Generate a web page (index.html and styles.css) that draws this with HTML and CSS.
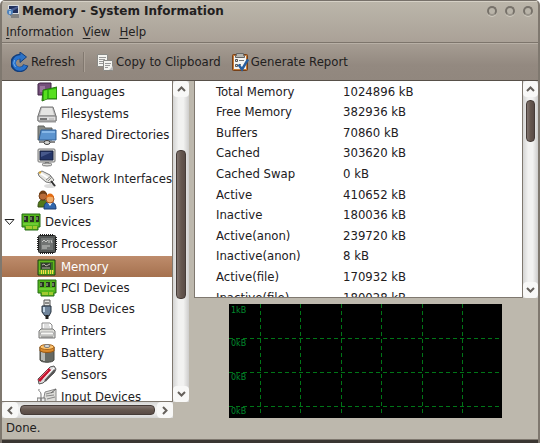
FILE: index.html
```html
<!DOCTYPE html>
<html lang="en">
<head>
<meta charset="utf-8">
<title>Memory - System Information</title>
<link rel="stylesheet" href="styles.css">
</head>
<body>
<div class="window">
  <header class="titlebar">
    <svg class="app-icon" viewBox="0 0 14 14" aria-hidden="true"><path d="M1 1h11v9H1z" fill="#d8dce0"/><path d="M2 2h9v7H2z" fill="#20305c"/><path d="M2 6l9-4v2L2 9z" fill="#4b5f92"/><path d="M1 10h11l2 4H1z" fill="#aeb0b0"/><path d="M3 11h9M4 13h8" stroke="#555" /><circle cx="3" cy="8" r="3" fill="#4d82bd"/><path d="M3 7v3M3 5v1" stroke="#fff"/></svg>
    <h1>Memory - System Information</h1>
    <div class="window-buttons">
      <button aria-label="Minimize"></button><button aria-label="Maximize"></button><button aria-label="Close"></button>
    </div>
  </header>
  <nav class="menubar">
    <button><u>I</u>nformation</button><button><u>V</u>iew</button><button><u>H</u>elp</button>
  </nav>
  <div class="toolbar">
    <button class="tool">
      <svg viewBox="0 0 18 20" aria-hidden="true"><path d="M10 4.500H8.500A6.500 6.500 0 1 0 14.800 13" fill="none" stroke="#123e7d" stroke-width="5.500"/><path d="M9 0l6.500 5L9 10.500z" fill="#2d73c5" stroke="#123e7d"/><path d="M10.500 5H8.500A6 6 0 1 0 14.500 13.500" fill="none" stroke="#2872cc" stroke-width="3.500"/><path d="M3.500 8a6 6 0 0 0 1 7" fill="none" stroke="#79b4ee"/></svg>Refresh</button>
    <span class="divider"></span>
    <button class="tool">
      <svg viewBox="0 0 18 20" aria-hidden="true"><path d="M1.500 2.500h10v12h-10z" fill="#f4f4f0" stroke="#8a8a86"/><path d="M3 5.500h7M3 7.500h6M3 9.500h7M3 11.500h5" stroke="#999"/><path d="M7.500 8.500h9v10h-9z" fill="#f4f4f0" stroke="#8a8a86"/><path d="M9 11.500h6M9 13.500h5M9 15.500h3" stroke="#999"/><path d="M17 14v4h-4z" fill="#bbb"/></svg>Copy to Clipboard</button>
    <button class="tool">
      <svg viewBox="0 0 18 20" aria-hidden="true"><rect x="1.500" y="2.500" width="15" height="16" rx="1" fill="#c87a35" stroke="#754018"/><path d="M3 4h12v13H3z" fill="#f5f5f3"/><path d="M5.500 3.500v-2h7v2h1v2h-9v-2z" fill="#b5b5b0" stroke="#666"/><path d="M4.500 7.500h2v2h-2zM4.500 12.500h2v2h-2z" fill="#ddd" stroke="#555"/><path d="M8 8.500h5M8 12.500h2" stroke="#777"/><path d="M7.500 12.500l3.500 5 6-10" fill="none" stroke="#285e9e" stroke-width="2.500"/></svg>Generate Report</button>
  </div>

  <main class="panes">
    <section class="sidebar">
      <ul class="tree">
        <li class="child"><svg viewBox="0 0 20 20"><path d="M1 2l2-1h11v12H1z" fill="#75507b" stroke="#3f2545"/><path d="M3 4h5v6H3z" fill="#9a769e"/><path d="M6 8l5-1 9-2v12H10l-5 2z" fill="#30b80f" stroke="#287010"/><path d="M7 9l3-1v9l-3 1zM12 8l7-1v9h-7z" fill="#58df20"/></svg>Languages</li>
        <li class="child short"><svg viewBox="0 0 20 20"><path d="M4 3h12l3 9v5H1v-5z" fill="#bbb" stroke="#777"/><path d="M5 4h10l2 7H3z" fill="#e5e5e3"/><path d="M1 12h18v5H1z" fill="#ddd" stroke="#777"/><path d="M3 14h7v2H3z" fill="#777"/><path d="M12 15h5" stroke="#aaa"/><path d="M2 18.500h17" stroke="#ccc"/></svg>Filesystems</li>
        <li class="child"><svg viewBox="0 0 20 20"><path d="M1 1h6l1 2h7v12H1z" fill="#888b86" stroke="#60635e"/><path d="M4 5h15v10H2z" fill="#5c94cf" stroke="#315f94"/><path d="M5 6h13v2H5z" fill="#87b7e7"/><path d="M2 17h16" stroke="#888" stroke-width="2"/><path d="M10 15v2" stroke="#555" stroke-width="2"/><ellipse cx="10" cy="17.500" rx="3" ry="2" fill="#d7d7d4" stroke="#444"/></svg>Shared Directories</li>
        <li class="child"><svg viewBox="0 0 20 20"><rect x="1" y="2" width="17" height="13" rx="1" fill="#ddddd9" stroke="#777"/><path d="M3 4h13v9H3z" fill="#243568" stroke="#16213e"/><path d="M4 5h11L4 10z" fill="#485a8c"/><path d="M8 15h4v2H8z" fill="#777"/><ellipse cx="10" cy="17.500" rx="5" ry="1.500" fill="#e1e1de" stroke="#777"/></svg>Display</li>
        <li class="child short"><svg viewBox="0 0 20 20"><ellipse cx="13" cy="17" rx="6" ry="2" fill="#ddd"/><path d="M1 4l4-2 8 4 4 5-3 3-5-1-7-6z" fill="#e4e4df" stroke="#777"/><path d="M3 4l8 5" stroke="#fff" stroke-width="2"/><path d="M9 11l5-4M11 12l4-4" stroke="#888"/><path d="M14 12l4 5" stroke="#333" stroke-width="2"/><path d="M2 4l2-1" stroke="#d6a532" stroke-width="2"/></svg>Network Interfaces</li>
        <li class="child"><svg viewBox="0 0 20 20"><path d="M1 17c0-6 2-7 5-7s5 2 5 7z" fill="#537818" stroke="#344c14"/><circle cx="6" cy="6" r="4" fill="#b86b38" stroke="#734018"/><path d="M2 5c0-6 8-6 8 0-4-2-5-1-8 0" fill="#704018"/><path d="M7 19c0-6 2-7 6-7s6 2 6 7z" fill="#3267ac" stroke="#1c3d70"/><path d="M11 13l2 3 2-3z" fill="#fff"/><circle cx="13" cy="9" r="4" fill="#efac68" stroke="#a75621"/><path d="M9 8c0-6 8-6 8 0-4-2-5-1-8 0" fill="#e36d16"/></svg>Users</li>
        <li class="parent short"><svg class="expander" viewBox="0 0 11 8"><path d="M1 1.500h9l-4.500 5z" fill="#fff" stroke="#222"/></svg><svg viewBox="0 0 20 20"><path d="M1 2h18v13h-2v3H4v-3H1z" fill="#53b51c" stroke="#276c15"/><path d="M3 4h4v6H3zM9 4h4v6H9zM15 4h3v6h-3z" fill="#263320"/><path d="M4 5v3M10 5v3M16 5v3" stroke="#b4c4a5"/><path d="M2 12h15" stroke="#8be34e"/><path d="M6 14v3M8 14v3M10 14v3M13 14v3M15 14v3" stroke="#f2df49"/></svg>Devices</li>
        <li class="child tall"><svg viewBox="0 0 20 20"><path d="M3.500 0v20M5.500 0v20M7.500 0v20M9.500 0v20M11.500 0v20M13.500 0v20M15.500 0v20M0 3.500h20M0 5.500h20M0 7.500h20M0 9.500h20M0 11.500h20M0 13.500h20M0 15.500h20" stroke="#252525"/><rect x="1.500" y="1.500" width="17" height="17" rx="1" fill="#545756" stroke="#222"/><path d="M4 4h12v12H4z" fill="#717473"/><path d="M5 8l2-2 2 2 2-2M12 6v3M14 6l1 3M5 12h8M5 14h5" fill="none" stroke="#c8c9c7"/></svg>Processor</li>
        <li class="child short selected"><svg viewBox="0 0 20 20"><path d="M1 3h17v15H1z" fill="#61b71c" stroke="#173b10"/><path d="M3 5h13v10H3z" fill="#3d7720"/><path d="M4 6h10v6H4z" fill="#343c31"/><path d="M5 8l2-1 2 2 4-2M5 11h8" fill="none" stroke="#b4b2a2"/><path d="M2 14h15" stroke="#a7d53f"/><path d="M4.500 13v4M6.500 13v4M8.500 13v4M11.500 13v4M13.500 13v4M15.500 13v4" stroke="#f5dc47"/></svg>Memory</li>
        <li class="child short"><svg viewBox="0 0 20 20"><path d="M1 2h18v13h-2v3H4v-3H1z" fill="#53b51c" stroke="#276c15"/><path d="M3 4h4v5H3zM9 4h4v5H9zM15 4h3v5h-3z" fill="#263320"/><path d="M4 5v3M10 5v3M16 5v3" stroke="#b4c4a5"/><path d="M2 11h15" stroke="#8be34e"/><path d="M6 14v3M8 14v3M10 14v3M13 14v3M15 14v3" stroke="#f2df49"/></svg>PCI Devices</li>
        <li class="child"><svg viewBox="0 0 20 20"><path d="M7 1h6v6H7z" fill="#e4e4e1" stroke="#555"/><path d="M9 3v2M11 3v2" stroke="#333"/><path d="M5 7h9v6l-2 4H8l-3-4z" fill="#70859c" stroke="#26323f"/><path d="M7 8v5" stroke="#c5d6e5" stroke-width="2"/><path d="M10 16v4" stroke="#222" stroke-width="3"/></svg>USB Devices</li>
        <li class="child"><svg viewBox="0 0 20 20"><path d="M5 9V2h8l2 2v5z" fill="#fff" stroke="#888"/><path d="M7 4h5M7 6h6" stroke="#bbb"/><path d="M2 10l2-2h12l2 2v7H2z" fill="#deded9" stroke="#777"/><path d="M4 11h12l1 3H3z" fill="#f6f6f3" stroke="#aaa"/><path d="M4 16h12" stroke="#777"/></svg>Printers</li>
        <li class="child"><svg viewBox="0 0 20 20"><path d="M3 4v13c1 3 13 3 14 0V4z" fill="#666963" stroke="#464843"/><path d="M5 8v9M7 8v10" stroke="#b5b7b2" stroke-width="2"/><path d="M3 4v4c3 2 11 2 14 0V4z" fill="#dc8b2c" stroke="#965713"/><ellipse cx="10" cy="4" rx="7" ry="2.500" fill="#ffc36c" stroke="#aa681e"/><ellipse cx="10" cy="3" rx="3" ry="1.500" fill="#ddd" stroke="#777"/></svg>Battery</li>
        <li class="child"><svg viewBox="0 0 20 20"><path d="M1 14L13 2l4-1 2 3-2 4L6 18l-4 1z" fill="#ddd" stroke="#555"/><path d="M8 16L18 5" stroke="#555" stroke-width="2"/><path d="M6 14L17 3" stroke="#fff"/><path d="M2 16L13 4" stroke="#c5132f" stroke-width="3"/><path d="M3 13l8-8" stroke="#f06678"/></svg>Sensors</li>
        <li class="child"><svg viewBox="0 0 20 20"><path d="M8 5l11-3v13H6z" fill="#ddddda" stroke="#888"/><path d="M9 7l8-2M9 9l8-1M10 12l8-2" stroke="#888"/><path d="M0 11h8v8H1z" fill="#eee" stroke="#777"/><path d="M4 14V7C4 4 1 5 2 2M4 11v4" fill="none" stroke="#777"/><path d="M14 6l5-4" stroke="#666"/></svg>Input Devices</li>
      </ul>
      <div class="scroll vertical">
        <button aria-label="Scroll up"><svg viewBox="0 0 9 6"><path d="M1 5l3.500-3.500L8 5"/></svg></button>
        <span class="track tree-track"><span class="thumb"></span></span>
        <button aria-label="Scroll down"><svg viewBox="0 0 9 6"><path d="M1 1l3.500 3.500L8 1"/></svg></button>
      </div>
      <div class="scroll horizontal">
        <button aria-label="Scroll left"><svg viewBox="0 0 6 9"><path d="M5 1L1.500 4.500 5 8"/></svg></button>
        <span class="track"><span class="thumb"></span></span>
        <button aria-label="Scroll right"><svg viewBox="0 0 6 9"><path d="M1 1l3.500 3.500L1 8"/></svg></button>
      </div>
    </section>
    <div class="splitter"><span class="grip"></span></div>
    <section class="content">
      <div class="details">
        <div class="table-box">
        <table>
          <tbody>
            <tr><th scope="row">Total Memory</th><td>1024896 kB</td></tr>
            <tr><th scope="row">Free Memory</th><td>382936 kB</td></tr>
            <tr><th scope="row">Buffers</th><td>70860 kB</td></tr>
            <tr><th scope="row">Cached</th><td>303620 kB</td></tr>
            <tr><th scope="row">Cached Swap</th><td>0 kB</td></tr>
            <tr><th scope="row">Active</th><td>410652 kB</td></tr>
            <tr><th scope="row">Inactive</th><td>180036 kB</td></tr>
            <tr><th scope="row">Active(anon)</th><td>239720 kB</td></tr>
            <tr><th scope="row">Inactive(anon)</th><td>8 kB</td></tr>
            <tr><th scope="row">Active(file)</th><td>170932 kB</td></tr>
            <tr><th scope="row">Inactive(file)</th><td>180028 kB</td></tr>
          </tbody>
        </table>
        </div>
        <div class="scroll vertical">
          <button aria-label="Scroll up"><svg viewBox="0 0 9 6"><path d="M1 5l3.500-3.500L8 5"/></svg></button>
          <span class="track details-track"><span class="thumb"></span></span>
          <button aria-label="Scroll down"><svg viewBox="0 0 9 6"><path d="M1 1l3.500 3.500L8 1"/></svg></button>
        </div>
      </div>
      <div class="splitter row"><span class="grip"></span></div>
      <svg class="graph" viewBox="0 0 273 114" role="img" aria-label="Memory usage graph">
        <rect width="273" height="114" fill="#000"/>
        <g stroke="#007517" stroke-dasharray="4 3">
          <path d="M0 34.500h270M0 68.500h270M0 102.500h270"/>
          <path d="M31.500 0v111M71.500 0v111M112.500 0v111M152.500 0v111M193.500 0v111M233.500 0v111"/>
        </g>
        <g class="graph-labels"><text x="2" y="9">1kB</text><text x="2" y="42">0kB</text><text x="2" y="76">0kB</text><text x="2" y="110">0kB</text></g>
      </svg>
    </section>
  </main>
  <footer class="statusbar">Done.</footer>
</div>
</body>
</html>
```
FILE: styles.css
```css
* { box-sizing: border-box; }

body {
  margin: 0;
  background: #fff;
  color: #22201e;
  font: 13px/20px "DejaVu Sans Condensed", "DejaVu Sans", sans-serif;
  font-stretch: condensed;
}

button {
  margin: 0;
  padding: 0;
  border: 0;
  background: none;
  color: inherit;
  font: inherit;
}

svg { display: block; flex: none; }

.window {
  height: 100vh;
  display: grid;
  grid-template-rows: 21px 21px 39px minmax(0, 1fr) 25px;
  border: solid #7f786f;
  border-width: 0 2px 0 2px;
  border-radius: 5px 5px 0 0;
  background: linear-gradient(#bcb7ab, #aaa197 42px, #bdb8ad 42px);
  overflow: hidden;
}

.titlebar {
  display: flex;
  align-items: center;
  padding: 0 5px;
  border-top: 1px solid #77716a;
  box-shadow: inset 0 1px #d6d1c6;
}

.app-icon { width: 14px; height: 14px; }

.titlebar h1 {
  flex: 1;
  margin: 0;
  padding-left: 1px;
  font: bold 12px/18px "DejaVu Sans", sans-serif;
  font-stretch: normal;
}

.window-buttons { display: flex; gap: 8px; }

.window-buttons button {
  width: 10px;
  height: 10px;
  border: 2px solid #77726a;
  border-bottom-color: #98938a;
  border-radius: 50%;
  background: #b9b4a9;
  box-shadow: 0 1px #cec9be;
}

.menubar {
  display: flex;
  gap: 9px;
  padding-left: 4px;
}

.menubar u { text-underline-offset: 2px; }

.toolbar {
  display: flex;
  align-items: center;
  padding: 0 9px;
  border-top: 1px solid #7d756c;
  border-bottom: 1px solid #575049;
  background: linear-gradient(#a69d93, #938980 60%, #91877e);
  box-shadow: inset 0 1px #b8b0a6;
}

.tool { display: flex; align-items: center; gap: 2px; margin-right: 8px; }
.tool + .tool { margin-left: 2px; }
.tool svg { width: 18px; height: 20px; }

.divider {
  width: 2px;
  height: 20px;
  margin-right: 11px;
  border-left: 1px solid #81786f;
  border-right: 1px solid #aaa096;
}

.panes {
  display: grid;
  grid-template-columns: 187px 5px minmax(0, 1fr);
}

.sidebar {
  display: grid;
  grid-template: minmax(0, 1fr) 16px / minmax(0, 1fr) 16px;
  min-height: 0;
}

.tree {
  min-height: 0;
  margin: 0;
  padding: 0;
  list-style: none;
  overflow: hidden;
  background: #fff;
  border-right: 1px solid #7f786f;
  border-bottom: 1px solid #7f786f;
}

.tree li {
  display: flex;
  align-items: center;
  height: 22px;
  gap: 4px;
  white-space: nowrap;
}

.tree svg { width: 20px; height: 20px; }
.tree .short { height: 21px; }
.tree .tall { height: 24px; }
.tree .child { padding-left: 35px; }
.tree .parent { padding-left: 2px; }
.tree .expander { width: 11px; height: 8px; margin-right: 2px; }

.tree .selected {
  color: #fff;
  background: linear-gradient(#be8c6c, #a5714e);
}

.scroll {
  display: flex;
  background: linear-gradient(90deg, #d4d4d3, #f2f2f1 35%, #f2f2f1 65%, #cdcccb);
}

.scroll.vertical { flex-direction: column; }
.scroll.horizontal { background: linear-gradient(#d4d4d3, #f2f2f1 35%, #f2f2f1 65%, #d4d4d3); }

.scroll button {
  display: grid;
  place-items: center;
  width: 100%;
  height: 16px;
  border-radius: 4px;
  background: #f8f8f7;
}

.scroll.horizontal button { width: 16px; }
.scroll svg { width: 9px; height: 6px; }
.scroll.horizontal svg { width: 6px; height: 9px; }
.scroll path { fill: none; stroke: #65605b; stroke-width: 2; }

.track { flex: 1; display: grid; min-height: 0; padding: 0 3px; }
.horizontal .track { padding: 3px 2px; }

.thumb {
  border: 1px solid #453b37;
  border-radius: 4px;
  background: linear-gradient(90deg, #827570, #65574f 50%, #594b46);
}

.horizontal .thumb { background: linear-gradient(#827570, #65574f 50%, #594b46); }
.tree-track { grid-template-rows: 53fr 149fr 87fr; }
.details-track { grid-template-rows: 3fr 42fr 139fr; }
.vertical .thumb { grid-row: 2; }

.splitter { display: grid; place-items: center; }

.grip {
  width: 4px;
  height: 44px;
  background: radial-gradient(circle, #8e887e 30%, transparent 50%) 0 0 / 2px 2px;
}

.row .grip { width: 44px; height: 4px; }

.content {
  display: grid;
  grid-template-rows: minmax(0, 1fr) 6px auto;
  min-height: 0;
}

.details {
  display: grid;
  grid-template-columns: minmax(0, 1fr) 15px;
  min-height: 0;
}

.table-box {
  min-height: 0;
  overflow: hidden;
  background: #fff;
  border: solid #7f786f;
  border-width: 0 1px 1px;
}

table { width: 100%; border-collapse: collapse; table-layout: fixed; }
tr { height: 21px; }
tr:nth-child(5n + 2), tr:nth-child(5n + 4) { height: 20px; }
th, td { padding: 0; text-align: left; font-weight: normal; line-height: 20px; }
th { width: 148px; padding-left: 21px; }

.graph { width: 273px; height: 114px; margin-left: 35px; }
.graph-labels { fill: #008a2e; font: 8px "DejaVu Sans", sans-serif; }

.statusbar {
  padding-left: 4px;
  border-bottom: 3px solid #3a3632;
  box-shadow: inset 0 -1px #7f786f;
}
```
